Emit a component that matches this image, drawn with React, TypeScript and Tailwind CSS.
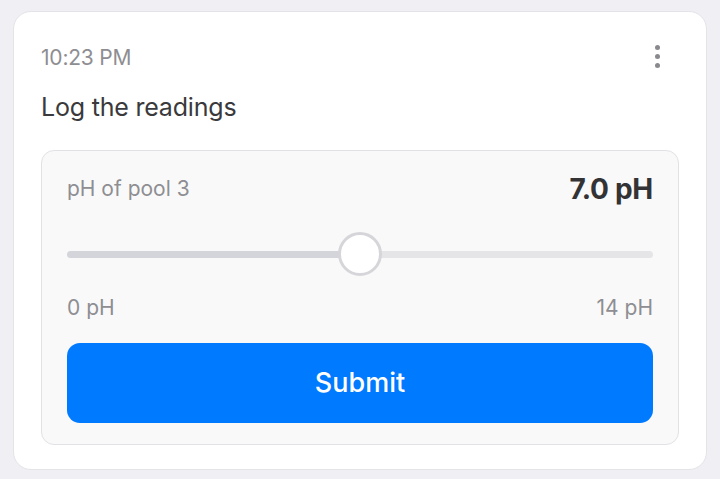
export default function App() {
  return (
    <div
      className="min-h-screen bg-[#efeff4] px-[13px] pt-[11px]"
      style={{ fontFamily: "Inter, 'Noto Sans', sans-serif" }}
    >
      <div className="rounded-[18px] border border-[#e4e4e8] bg-white px-[27px] pt-[32px] pb-[24px]">
        {/* Header */}
        <div className="flex h-[28px] items-center justify-between">
          <span className="text-[21px] leading-[28px] tracking-[-0.2px] text-[#8e8e92]">10:23 PM</span>
          <div className="mr-[19px] -mt-[3px] flex flex-col items-center gap-[4px]">
            <span className="h-[5px] w-[5px] rounded-full bg-[#8a8a8e]" />
            <span className="h-[5px] w-[5px] rounded-full bg-[#8a8a8e]" />
            <span className="h-[5px] w-[5px] rounded-full bg-[#8a8a8e]" />
          </div>
        </div>
        <p className="mt-[20px] text-[25px] leading-[30px] tracking-[-0.2px] text-[#3a3a3c]">Log the readings</p>

        {/* Reading panel */}
        <div className="mt-[28px] rounded-[13px] border border-[#e2e2e6] bg-[#f9f9f9] px-[25px] pt-[25px] pb-[21px]">
          <div className="flex h-[26px] items-center justify-between">
            <span className="text-[21px] leading-[26px] text-[#8e8e93]">pH of pool 3</span>
            <span className="text-[28px] leading-[26px] font-bold tracking-[-0.3px] text-[#333335]">7.0 pH</span>
          </div>

          <div className="relative mt-[30px] flex h-[44px] items-center">
            <div className="flex h-[7px] w-full overflow-hidden rounded-full">
              <div className="h-full w-1/2 bg-[#d3d5da]" />
              <div className="h-full w-1/2 bg-[#e5e5e7]" />
            </div>
            <div className="absolute left-[271px] top-0 h-[44px] w-[44px] rounded-full border-[3px] border-[#d6d6da] bg-white" />
          </div>

          <div className="mt-[19px] flex h-[26px] items-center justify-between text-[21px] leading-[26px] text-[#8e8e93]">
            <span>0 pH</span>
            <span>14 pH</span>
          </div>

          <button className="mt-[22px] flex h-[80px] w-full items-center justify-center rounded-[13px] bg-[#007aff] text-[27px] font-medium text-white">
            Submit
          </button>
        </div>
      </div>
    </div>
  );
}
